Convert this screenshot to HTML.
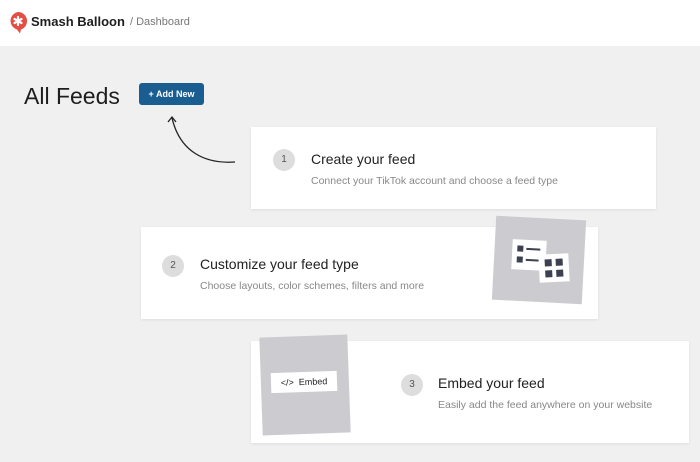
<!DOCTYPE html><html><head><style>
body{margin:0;width:700px;height:462px;background:#f0f0f1;font-family:"Liberation Sans",sans-serif;position:relative;overflow:hidden}
.hdr{position:absolute;left:0;top:0;width:700px;height:46px;background:#fff}
.card{position:absolute;background:#fff;box-shadow:0 1px 3px rgba(0,0,0,.08)}
.num{position:absolute;width:22px;height:22px;border-radius:50%;background:#ddd;color:#555;font-size:10px;text-align:center;line-height:22px}
.t{position:absolute;font-size:14px;color:#222}
.s{position:absolute;font-size:10.5px;color:#888}
.a{position:absolute}
</style></head><body>
<div class="hdr">
<svg class="a" style="left:8px;top:11px" width="20" height="24" viewBox="0 0 20 24"><path d="M10 1a9 9 0 0 1 3 17.5l-1 4-3-4A9 9 0 0 1 10 1z" fill="#e34f44"/><g stroke="#fff" stroke-width="2.2" stroke-linecap="round"><path d="M10 6v8M6.5 8l7 4M6.5 12l7-4"/></g></svg>
<div class="a" style="left:31px;top:14px;font-size:13px;font-weight:bold;color:#1e1e1e">Smash Balloon</div>
<div class="a" style="left:130px;top:16px;font-size:11px;color:#777">/ Dashboard</div>
</div>
<div class="a" style="left:24px;top:83px;font-size:23px;color:#1e1e1e">All Feeds</div>
<div class="a" style="left:139px;top:83px;width:65px;height:22px;background:#1a5d91;border-radius:3px;color:#fff;font-size:9px;font-weight:bold;line-height:22px;text-align:center">+ Add New</div>
<svg class="a" style="left:165px;top:112px" width="75" height="55"><path d="M70 50C40 52 15 40 7 6" fill="none" stroke="#222" stroke-width="1.3"/><path d="M3 10l4-5 4 5" fill="none" stroke="#222" stroke-width="1.3"/></svg>
<div class="card" style="left:251px;top:127px;width:405px;height:82px"></div>
<div class="num" style="left:273px;top:149px">1</div>
<div class="t" style="left:311px;top:151px">Create your feed</div>
<div class="s" style="left:311px;top:175px">Connect your TikTok account and choose a feed type</div>
<div class="card" style="left:141px;top:227px;width:457px;height:92px"></div>
<div class="num" style="left:162px;top:255px">2</div>
<div class="t" style="left:200px;top:256px">Customize your feed type</div>
<div class="s" style="left:200px;top:280px">Choose layouts, color schemes, filters and more</div>
<div class="a" style="left:494px;top:218px;width:90px;height:84px;background:#ccccd0;transform:rotate(3deg)"></div>
<div class="a" style="left:512px;top:240px;width:34px;height:30px;background:#fff;transform:rotate(3deg)"><div class="a" style="left:5px;top:6px;width:6px;height:6px;background:#3c4050"></div><div class="a" style="left:5px;top:17px;width:6px;height:6px;background:#3c4050"></div><div class="a" style="left:14px;top:8px;width:14px;height:1.5px;background:#3c4050"></div><div class="a" style="left:14px;top:19px;width:14px;height:1.5px;background:#3c4050"></div></div>
<div class="a" style="left:539px;top:254px;width:30px;height:28px;background:#fff;transform:rotate(-3deg)"><div class="a" style="left:6px;top:5px;width:7px;height:7px;background:#3c4050"></div><div class="a" style="left:17px;top:5px;width:7px;height:7px;background:#3c4050"></div><div class="a" style="left:6px;top:16px;width:7px;height:7px;background:#3c4050"></div><div class="a" style="left:17px;top:16px;width:7px;height:7px;background:#3c4050"></div></div>
<div class="card" style="left:251px;top:341px;width:438px;height:102px"></div>
<div class="a" style="left:261px;top:336px;width:88px;height:98px;background:#ccccd0;transform:rotate(-2deg)"></div>
<div class="a" style="left:271px;top:372px;width:66px;height:20px;background:#fff;font-size:9px;color:#222;line-height:20px;text-align:center;transform:rotate(-2deg)">&lt;/&gt; &nbsp;Embed</div>
<div class="num" style="left:401px;top:374px">3</div>
<div class="t" style="left:438px;top:375px">Embed your feed</div>
<div class="s" style="left:438px;top:399px">Easily add the feed anywhere on your website</div>
</body></html>
